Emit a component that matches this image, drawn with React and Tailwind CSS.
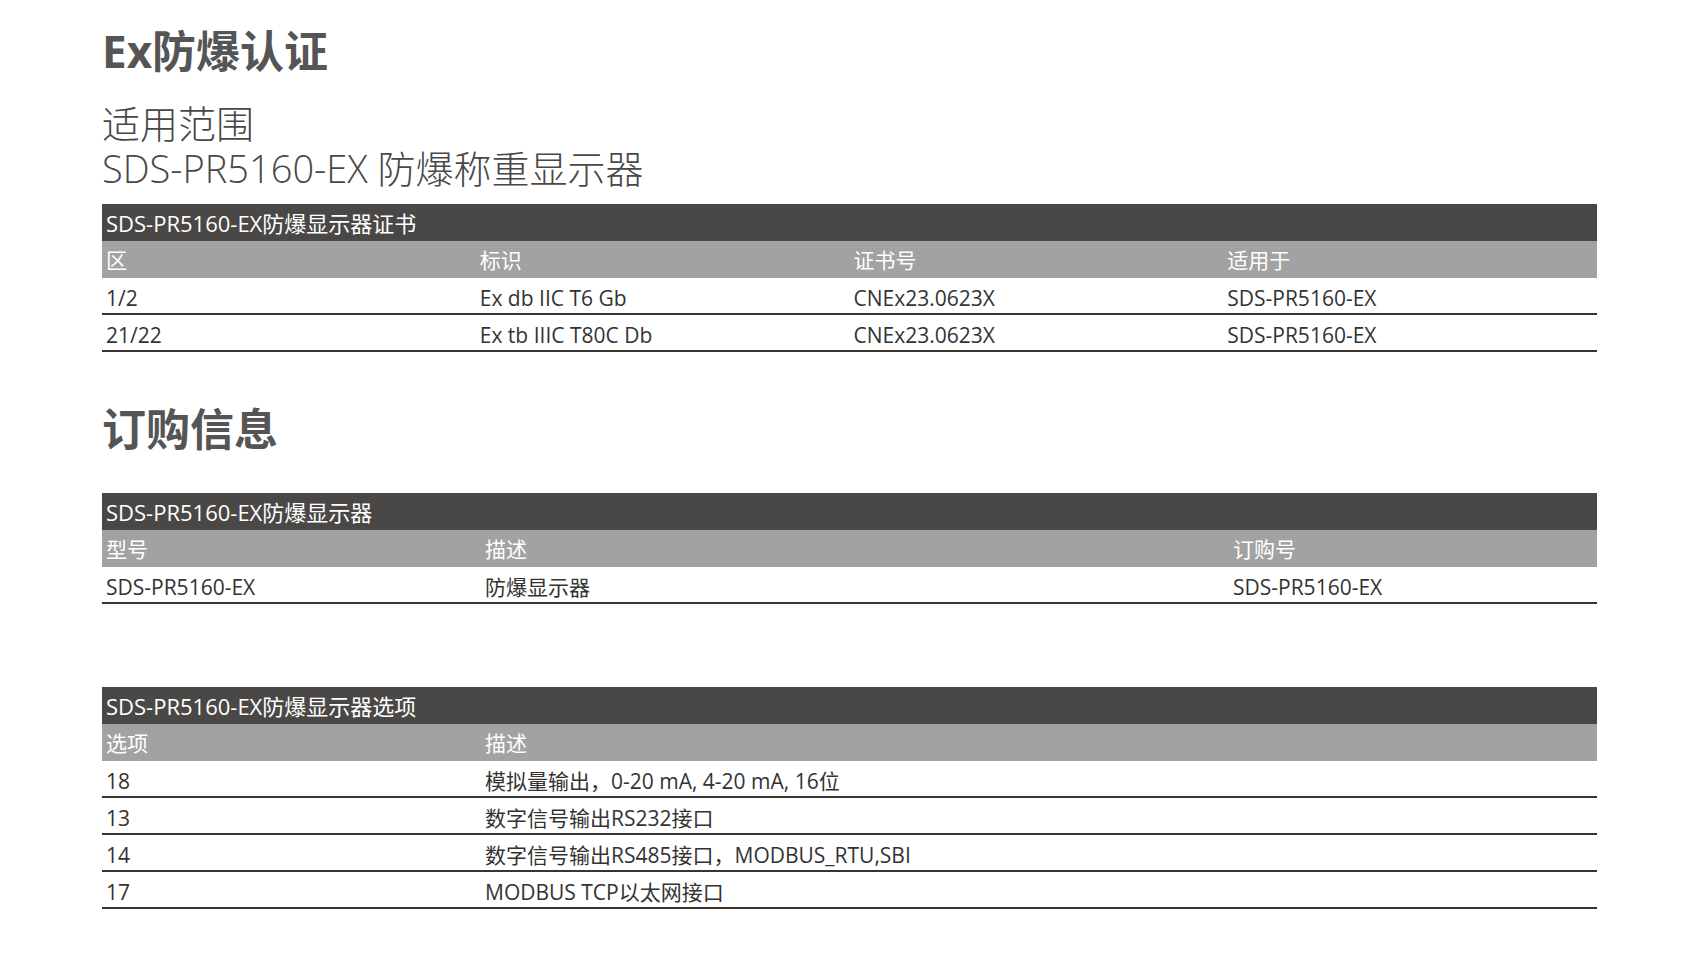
const font = { fontFamily: '"Open Sans", "Noto Sans CJK SC", sans-serif' };

const certRows = [
    ['1/2', 'Ex db IIC T6 Gb', 'CNEx23.0623X', 'SDS-PR5160-EX'],
    ['21/22', 'Ex tb IIIC T80C Db', 'CNEx23.0623X', 'SDS-PR5160-EX'],
];

const optionRows = [
    ['18', '模拟量输出，0-20 mA, 4-20 mA, 16位'],
    ['13', '数字信号输出RS232接口'],
    ['14', '数字信号输出RS485接口，MODBUS_RTU,SBI'],
    ['17', 'MODBUS TCP以太网接口'],
];

function Table({ title, cols, head, rows }) {
    return (
        <div className="w-[1495px] text-[21px]">
            <div className="h-[37px] flex items-center pl-[4px] pt-[2px] text-[22px] bg-[#4a4846] text-white">{title}</div>
            <div className={`grid ${cols} h-[37px] items-center pt-[2px] bg-[#a2a2a2] text-white`}>
                {head.map(h => (
                    <div key={h} className="pl-[4px]">{h}</div>
                ))}
            </div>
            {rows.map((r, i) => (
                <div key={i} className={`grid ${cols} h-[37px] items-center pt-[5px] border-b-2 border-[#3a3431] text-[#333]`}>
                    {r.map((c, j) => (
                        <div key={j} className="pl-[4px]">{c}</div>
                    ))}
                </div>
            ))}
        </div>
    );
}

export default function App() {
    return (
        <div className="w-[1700px] h-[957px] bg-white pl-[102px]" style={font}>
            <h1 className="pt-[25px] text-[44px] leading-[53px] font-bold text-[#555]">Ex防爆认证</h1>

            <div className="mt-[23px] text-[38px] leading-[45px] font-light text-[#484848]">
                <div>适用范围</div>
                <div>SDS-PR5160-EX 防爆称重显示器</div>
            </div>

            <div className="mt-[13px]">
                <Table
                    title="SDS-PR5160-EX防爆显示器证书"
                    cols="grid-cols-4"
                    head={['区', '标识', '证书号', '适用于']}
                    rows={certRows}
                />
            </div>

            <h2 className="mt-[51px] text-[44px] leading-[53px] font-bold text-[#555]">订购信息</h2>

            <div className="mt-[37px]">
                <Table
                    title="SDS-PR5160-EX防爆显示器"
                    cols="grid-cols-[379px_748px_1fr]"
                    head={['型号', '描述', '订购号']}
                    rows={[['SDS-PR5160-EX', '防爆显示器', 'SDS-PR5160-EX']]}
                />
            </div>

            <div className="mt-[83px]">
                <Table
                    title="SDS-PR5160-EX防爆显示器选项"
                    cols="grid-cols-[379px_1fr]"
                    head={['选项', '描述']}
                    rows={optionRows}
                />
            </div>
        </div>
    );
}
